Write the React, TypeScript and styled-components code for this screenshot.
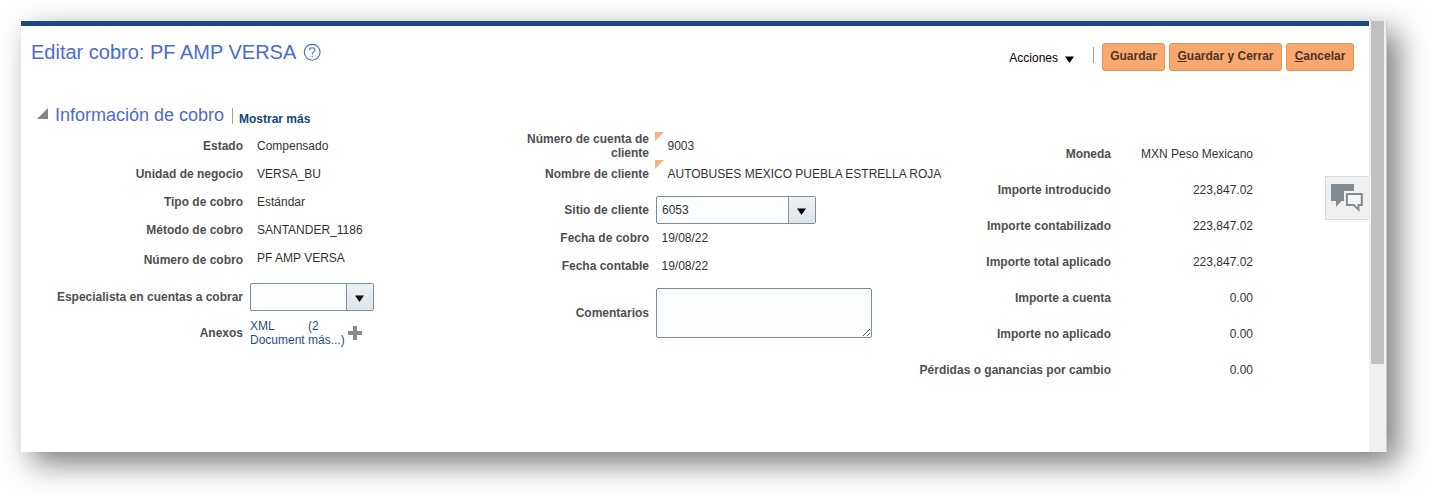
import React from "react";
import styled, { createGlobalStyle } from "styled-components";

const GlobalStyle = createGlobalStyle`
  * { box-sizing: border-box; }
  html, body { margin: 0; background: #fff; }
  body {
    height: 494px;
    overflow: hidden;
    font: 12px/14px "Liberation Sans", Arial, sans-serif;
    color: #333;
  }
`;

const Stage = styled.div`
  height: 494px;
  padding: 21px 42px 42px 21px;
`;

const Window = styled.div`
  display: flex;
  width: 1366px;
  height: 431px;
  background: #fff;
  box-shadow: 11px 11px 29px rgba(0, 0, 0, 0.53);
`;

const Page = styled.main`
  position: relative;
  width: 1348px;
  border-top: 5px solid #164b7b;
`;

const Header = styled.header`
  display: flex;
  justify-content: space-between;
  height: 76px;
  padding: 14px 15px 0 10px;
`;

const Title = styled.h1`
  display: flex;
  align-items: center;
  gap: 7px;
  height: 24px;
  margin: 0;
  font-size: 20px;
  line-height: 24px;
  font-weight: 400;
  color: #4b6bd0;
  white-space: nowrap;
`;

const Toolbar = styled.div`
  display: flex;
  gap: 4px;
  padding-top: 3px;
`;

const MenuButton = styled.button`
  display: flex;
  align-items: center;
  gap: 7px;
  height: 30px;
  padding: 0;
  margin-right: 15px;
  border: 0;
  background: none;
  font: inherit;
  color: #000;
`;

const Caret = styled.svg<{ $drop: number }>`
  display: block;
  width: 9px;
  height: 7px;
  margin-top: ${(p) => p.$drop}px;
  fill: #000;
`;

const Separator = styled.span<{ $top: number; $after?: number }>`
  width: 1px;
  height: 16px;
  margin-top: ${(p) => p.$top}px;
  margin-right: ${(p) => p.$after ?? 0}px;
  background: #a5a58f;
`;

const ActionButton = styled.button<{ $width: number }>`
  width: ${(p) => p.$width}px;
  height: 28px;
  padding: 0 0 2px;
  border: 1px solid #e2935c;
  border-radius: 3px;
  background: #f9a870;
  font: bold 12px/14px "Liberation Sans", Arial, sans-serif;
  color: #4b3526;
  white-space: nowrap;
`;

const SectionHead = styled.div`
  display: flex;
  align-items: flex-start;
  height: 30px;
  padding: 3px 0 0 16px;
`;

const Disclosure = styled.span`
  width: 0;
  height: 0;
  margin: 3px 7px 0 0;
  border: solid transparent;
  border-width: 0 0 11px 11px;
  border-bottom-color: #838789;
`;

const SectionTitle = styled.h2`
  width: 177px;
  margin: 0;
  font-size: 18px;
  line-height: 20px;
  font-weight: 400;
  color: #4b6bd0;
  white-space: nowrap;
`;

const MoreLink = styled.a`
  margin: 7px 0 0 6px;
  font-weight: 700;
  color: #144578;
`;

const Columns = styled.div`
  display: grid;
  grid-template-columns: 404px 474px 354px;
`;

const Column = styled.div<{ $top?: number }>`
  padding-top: ${(p) => p.$top ?? 0}px;
`;

const Field = styled.div<{ $label: number; $height?: number; $top?: number; $value?: number }>`
  display: grid;
  grid-template-columns: ${(p) => p.$label}px ${(p) => (p.$value ? `${p.$value}px` : "auto")};
  align-items: center;
  height: ${(p) => p.$height ?? 28}px;
  margin-top: ${(p) => p.$top ?? 0}px;
`;

const Label = styled.label<{ $drop?: number }>`
  padding-top: ${(p) => p.$drop ?? 0}px;
  font-weight: 700;
  color: #4f4f4f;
  text-align: right;
`;

const Value = styled.span<{ $indent?: number; $end?: boolean }>`
  padding-left: ${(p) => p.$indent ?? 0}px;
  text-align: ${(p) => (p.$end ? "right" : "left")};
  white-space: nowrap;
`;

const Flagged = styled.div`
  display: flex;
  align-items: center;
  height: 28px;
  padding-left: 6px;
  white-space: nowrap;
`;

const Flag = styled.span`
  align-self: flex-start;
  width: 0;
  height: 0;
  margin-right: 3.5px;
  border: solid transparent;
  border-width: 9px 9px 0 0;
  border-top-color: #f9b07c;
`;

const Combo = styled.div<{ $width: number }>`
  display: flex;
  width: ${(p) => p.$width}px;
  height: 28px;
  margin-left: 7px;
  border: 1px solid #7b8f9f;
  border-radius: 2px;
  background: #fbfdff;
`;

const ComboText = styled.span`
  flex: 1;
  padding: 6px 5px;
`;

const ComboButton = styled.span`
  display: flex;
  justify-content: center;
  align-items: center;
  width: 27px;
  padding-right: 1px;
  border-left: 1px solid #7b8f9f;
  background: linear-gradient(#eef1f4, #dfe4ea);
`;

const Comments = styled.textarea`
  display: block;
  width: 216px;
  height: 50px;
  margin-left: 7px;
  border: 1px solid #7b8f9f;
  border-radius: 2px;
  background: #fbfdff;
  resize: both;
`;

const Attachments = styled.div`
  display: flex;
  align-items: center;
  padding-left: 7px;
  color: #1f4f82;
`;

const AttachmentLink = styled.a<{ $width: number }>`
  width: ${(p) => p.$width}px;
  white-space: nowrap;
`;

const ChatTab = styled.div`
  position: absolute;
  top: 150px;
  right: 0;
  width: 44px;
  height: 44px;
  border: 1px solid #d9dcdf;
  border-right: 0;
  background: #f0f0f0;
`;

const ScrollTrack = styled.div`
  width: 18px;
  padding: 0 2px;
  border-right: 1px solid #cbcbcb;
  background: #f0f0f0;
`;

const ScrollThumb = styled.div`
  width: 13px;
  height: 343px;
  background: #c1c1c1;
`;

const DownCaret = ({ drop }: { drop: number }) => (
  <Caret $drop={drop} viewBox="0 0 9 7">
    <path d="M0 .4h9L4.500 7z" />
  </Caret>
);

const HelpIcon = () => (
  <svg width="18" height="18" viewBox="0 0 18 18" fill="none" stroke="#4b6bd0">
    <circle cx="9.200" cy="9.300" r="7.900" strokeWidth="1.1" />
    <path d="M6.500 7.300C6.500 5.500 7.600 4.700 9.100 4.700s2.700.9 2.700 2.300c0 1.900-2.600 2-2.600 4.400" strokeWidth="1.1" />
    <path d="M9.200 12.700v1.400" strokeWidth="1.2" />
  </svg>
);

const ChatIcon = () => (
  <svg width="43" height="42" viewBox="0 0 43 42">
    <path d="M5 7h23v7H18v10h-2.500L10 30v-6H5z" fill="#838b90" />
    <path d="M20.900 16.900h14.900v11h-3.300v4.700l-4.800-4.700h-6.800z" fill="#f4f4f4" stroke="#838b90" strokeWidth="2" />
  </svg>
);

const PlusIcon = () => (
  <svg width="14" height="14" viewBox="0 0 14 14">
    <path d="M5 0h4v5h5v4H9v5H5V9H0V5h5z" fill="#868a8c" />
  </svg>
);

const receipt = [
  ["Estado", "Compensado"],
  ["Unidad de negocio", "VERSA_BU"],
  ["Tipo de cobro", "Estándar"],
  ["Método de cobro", "SANTANDER_1186"],
];

const amounts = [
  ["Moneda", "MXN Peso Mexicano"],
  ["Importe introducido", "223,847.02"],
  ["Importe contabilizado", "223,847.02"],
  ["Importe total aplicado", "223,847.02"],
  ["Importe a cuenta", "0.00"],
  ["Importe no aplicado", "0.00"],
  ["Pérdidas o ganancias por cambio", "0.00"],
];

export default function App() {
  return (
    <>
      <GlobalStyle />
      <Stage>
        <Window>
          <Page>
            <Header>
              <Title>
                Editar cobro: PF AMP VERSA
                <HelpIcon />
              </Title>
              <Toolbar>
                <MenuButton>
                  Acciones
                  <DownCaret drop={2} />
                </MenuButton>
                <Separator $top={4} $after={4} />
                <ActionButton $width={63}>Guardar</ActionButton>
                <ActionButton $width={113}><u>G</u>uardar y Cerrar</ActionButton>
                <ActionButton $width={68}><u>C</u>ancelar</ActionButton>
              </Toolbar>
            </Header>

            <SectionHead>
              <Disclosure />
              <SectionTitle>Información de cobro</SectionTitle>
              <Separator $top={3} />
              <MoreLink>Mostrar más</MoreLink>
            </SectionHead>

            <Columns>
              <Column>
                {receipt.map(([label, value]) => (
                  <Field key={label} $label={222}>
                    <Label>{label}</Label>
                    <Value $indent={14}>{value}</Value>
                  </Field>
                ))}
                <Field $label={222}>
                  <Label $drop={4}>Número de cobro</Label>
                  <Value $indent={14}>PF AMP VERSA</Value>
                </Field>
                <Field $label={222} $top={11}>
                  <Label>Especialista en cuentas a cobrar</Label>
                  <Combo $width={124}>
                    <ComboText />
                    <ComboButton><DownCaret drop={3} /></ComboButton>
                  </Combo>
                </Field>
                <Field $label={222} $top={8}>
                  <Label>Anexos</Label>
                  <Attachments>
                    <AttachmentLink $width={58}>XML<br />Document</AttachmentLink>
                    <AttachmentLink $width={40}>(2<br />más...)</AttachmentLink>
                    <PlusIcon />
                  </Attachments>
                </Field>
              </Column>

              <Column>
                <Field $label={224}>
                  <Label>Número de cuenta de<br />cliente</Label>
                  <Flagged><Flag />9003</Flagged>
                </Field>
                <Field $label={224}>
                  <Label>Nombre de cliente</Label>
                  <Flagged><Flag />AUTOBUSES MEXICO PUEBLA ESTRELLA ROJA</Flagged>
                </Field>
                <Field $label={224} $top={8}>
                  <Label>Sitio de cliente</Label>
                  <Combo $width={160}>
                    <ComboText>6053</ComboText>
                    <ComboButton><DownCaret drop={3} /></ComboButton>
                  </Combo>
                </Field>
                <Field $label={224}>
                  <Label>Fecha de cobro</Label>
                  <Value $indent={12.5}>19/08/22</Value>
                </Field>
                <Field $label={224}>
                  <Label>Fecha contable</Label>
                  <Value $indent={12.5}>19/08/22</Value>
                </Field>
                <Field $label={224} $height={50} $top={8}>
                  <Label>Comentarios</Label>
                  <Comments />
                </Field>
              </Column>

              <Column $top={4}>
                {amounts.map(([label, value]) => (
                  <Field key={label} $label={212} $value={142} $height={36}>
                    <Label>{label}</Label>
                    <Value $end>{value}</Value>
                  </Field>
                ))}
              </Column>
            </Columns>
            <ChatTab><ChatIcon /></ChatTab>
          </Page>
          <ScrollTrack><ScrollThumb /></ScrollTrack>
        </Window>
      </Stage>
    </>
  );
}
